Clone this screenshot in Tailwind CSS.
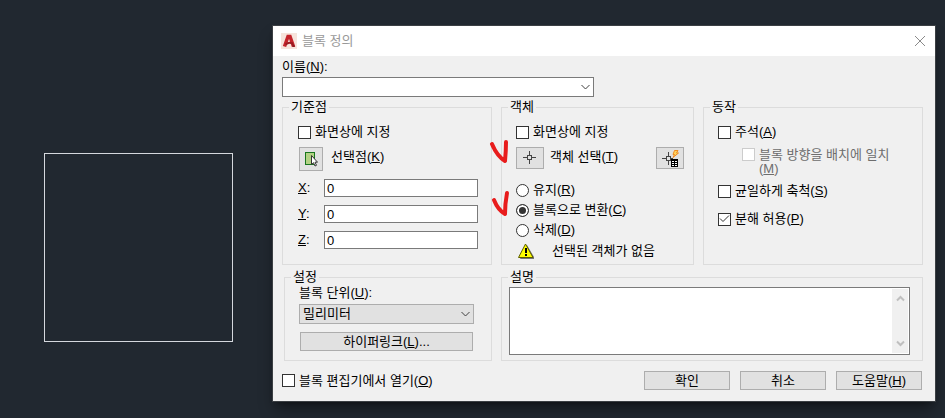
<!DOCTYPE html>
<html lang="ko">
<head>
  <meta charset="UTF-8" />
  <meta name="viewport" content="width=device-width, initial-scale=1.0"/>
  <title>블록 정의</title>
  <script src="https://cdn.jsdelivr.net/npm/@tailwindcss/browser@4"></script>
</head>
<body class="min-h-screen bg-[#212830] font-['Liberation_Sans','Noto_Sans_CJK_KR',sans-serif] text-[13px] leading-[14px] text-black">

  <main class="flex items-start">

    <!-- Drawing area -->
    <section class="w-[272px] shrink-0 pl-[44px] pt-[153px]">
      <div class="size-[189px] border border-[#d5d8dd]"></div>
    </section>

    <!-- Block definition dialog -->
    <div role="dialog" aria-labelledby="dialogTitle" class="relative flex-1 mt-[25px] mr-[9px] border border-[#3b3f43] bg-[#f0f0f0] shadow-lg shadow-black/40">

      <header class="flex items-center h-[30px] pl-2 pr-[9px] bg-white">
        <svg class="size-4 shrink-0" viewBox="0 0 16 16" aria-hidden="true">
          <rect width="16" height="16" fill="#f7e4dc"/>
          <path d="M3.5 13.5 L7 3.5 H9 L12.5 13.5" fill="none" stroke="#c4242b" stroke-width="3.5"/>
          <path d="M4.5 11.5 Q8 8.5 11.5 10.5" fill="none" stroke="#9c1c22" stroke-width="2"/>
          <path d="M11 9 L14.3 14 H11.5 Z" fill="#8e1a20"/>
        </svg>
        <h1 id="dialogTitle" class="ml-[5px] text-[#999999]">블록 정의</h1>
        <button type="button" aria-label="닫기" class="ml-auto">
          <svg class="size-3" viewBox="0 0 12 12" fill="none" stroke="#8a8a8a"><path d="M1 1 L11 11 M11 1 L1 11"/></svg>
        </button>
      </header>

      <form class="pt-1 pl-[9px] pr-3 pb-[11px]">
        <label for="blockName" class="block">이름(<u>N</u>):</label>
        <div class="relative w-[312px] mt-[3px]">
          <select id="blockName" class="block w-full h-5 px-1 appearance-none border border-[#7a7a7a] bg-white">
            <option></option>
          </select>
          <svg class="absolute right-1 top-[7px] w-[9px] h-[7px] pointer-events-none" viewBox="0 0 9 7" fill="none" stroke="#404040"><path d="M0.5 1 L4.5 5 L8.5 1"/></svg>
        </div>

        <div class="grid grid-cols-[210fr_193fr_220fr] gap-x-[9px] gap-y-[5px] mt-[3px]">

          <fieldset class="min-w-0 border border-[#dcdcdc]">
            <legend class="ml-[6px] px-[2px]">기준점</legend>
            <div class="pt-[11px] pl-[15px] pr-[13px] pb-[15px]">
              <label class="flex items-center gap-1">
                <input type="checkbox" class="size-[13px] appearance-none border border-[#333333] bg-white"/>
                화면상에 지정
              </label>
              <div class="flex items-start gap-2 mt-2 pl-px">
                <button type="button" id="pickPoint" class="grid place-items-center size-6 border border-[#adadad] bg-[#e1e1e1]">
                  <svg class="w-[14px] h-4" viewBox="0 0 14 16" aria-hidden="true">
                    <rect x="1.5" y="1.5" width="9" height="12" fill="#b2d183" stroke="#18751d"/>
                    <path d="M7.5 4.5 V13.5 L9.5 11.7 L11 15 L12.5 14.3 L11 11.2 H13.5 Z" fill="#ffffff" stroke="#333333"/>
                  </svg>
                </button>
                <label for="pickPoint" class="pt-[3px]">선택점(<u>K</u>)</label>
              </div>
              <div class="grid grid-cols-[26px_1fr] items-center gap-y-2 mt-2">
                <label for="baseX"><u>X</u>:</label>
                <input type="text" id="baseX" value="0" class="w-full h-[18px] px-[2px] border border-[#7a7a7a] bg-white"/>
                <label for="baseY"><u>Y</u>:</label>
                <input type="text" id="baseY" value="0" class="w-full h-[18px] px-[2px] border border-[#7a7a7a] bg-white"/>
                <label for="baseZ"><u>Z</u>:</label>
                <input type="text" id="baseZ" value="0" class="w-full h-[18px] px-[2px] border border-[#7a7a7a] bg-white"/>
              </div>
            </div>
          </fieldset>

          <fieldset class="relative min-w-0 border border-[#dcdcdc]">
            <legend class="ml-[6px] px-[2px]">객체</legend>
            <div class="pt-[11px] pl-[14px] pr-[9px] pb-1">
              <label class="flex items-center gap-1">
                <input type="checkbox" class="size-[13px] appearance-none border border-[#333333] bg-white"/>
                화면상에 지정
              </label>
              <div class="flex items-start mt-2">
                <button type="button" id="selectObjects" class="grid place-items-center w-7 h-[22px] border border-[#adadad] bg-[#e1e1e1]">
                  <svg class="w-[14px] h-[14px]" viewBox="0 0 14 14" fill="none" stroke="#444444" aria-hidden="true"><rect x="4.5" y="4.5" width="4" height="4"/><path d="M6.5 0 V4 M6.5 9 V13 M0 6.5 H4 M9 6.5 H13"/></svg>
                </button>
                <label for="selectObjects" class="ml-[6px] pt-[3px]">객체 선택(<u>T</u>)</label>
                <button type="button" aria-label="신속 선택" class="grid place-items-center w-7 h-[22px] ml-auto border border-[#adadad] bg-[#e1e1e1]">
                  <svg class="w-[18px] h-[18px]" viewBox="0 0 18 18" fill="none" aria-hidden="true">
                    <path d="M7.5 3 V7 M7.5 12 V16 M1 9.5 H5 M10 9.5 H12" stroke="#444444"/>
                    <rect x="5.5" y="7.5" width="4" height="4" stroke="#444444"/>
                    <path d="M13.5 1.5 H17 L15.5 4 H17.5 L12 8.5 L13.5 5.5 H12 Z" fill="#ffd45c" stroke="#ef8a22"/>
                    <rect x="10" y="10" width="7" height="8" fill="#000000"/>
                    <path d="M11 12 H13 V13 H11 Z M14 12 H16 V13 H14 Z M11 14 H13 V15 H11 Z M14 14 H16 V15 H14 Z M11 16 H13 V17 H11 Z M14 16 H16 V17 H14 Z" fill="#ffffff"/>
                  </svg>
                </button>
              </div>
              <div class="flex flex-col gap-[6px] mt-[14px]">
                <label class="flex items-center gap-1">
                  <input type="radio" name="objectMode" class="size-[13px] appearance-none rounded-full border border-[#333333] bg-white"/>
                  <span>유지(<u>R</u>)</span>
                </label>
                <label class="flex items-center gap-1">
                  <input type="radio" name="objectMode" checked class="size-[13px] appearance-none rounded-full border border-[#333333] bg-white checked:bg-[#333333] checked:shadow-[inset_0_0_0_2px_white]"/>
                  <span>블록으로 변환(<u>C</u>)</span>
                </label>
                <label class="flex items-center gap-1">
                  <input type="radio" name="objectMode" class="size-[13px] appearance-none rounded-full border border-[#333333] bg-white"/>
                  <span>삭제(<u>D</u>)</span>
                </label>
              </div>
              <p class="flex items-center gap-[18px] mt-[6px] pl-[2px]">
                <svg class="w-4 h-4" viewBox="0 0 16 16" aria-hidden="true">
                  <path d="M9 2 L16 14 V16 H2 Z" fill="#777777"/>
                  <path d="M7.5 1 L15 14.5 H0.5 Z" fill="#ffff00" stroke="#5c5c00" stroke-linejoin="round"/>
                  <path d="M7 5 H9 V10 H7 Z M7 11 H9 V13 H7 Z" fill="#000000"/>
                </svg>
                선택된 객체가 없음
              </p>
            </div>
            <!-- Red pen marks -->
            <svg class="absolute -left-[14px] top-[25px] w-[24px] h-[80px] pointer-events-none" viewBox="0 0 24 80" fill="none" stroke="#e81c1c" stroke-width="4" stroke-linecap="round" stroke-linejoin="round" aria-hidden="true">
              <path d="M4 5 Q9 17 17 22 Q18 12 18 3"/>
              <path d="M6 61 Q10 71 17 75 Q17 65 19 54"/>
            </svg>
          </fieldset>

          <fieldset class="min-w-0 border border-[#dcdcdc]">
            <legend class="ml-[6px] px-[2px]">동작</legend>
            <div class="pt-[11px] pl-[14px] pr-3">
              <label class="flex items-center gap-1">
                <input type="checkbox" class="size-[13px] appearance-none border border-[#333333] bg-white"/>
                <span>주석(<u>A</u>)</span>
              </label>
              <label class="flex items-start gap-1 mt-[9px] pl-6 text-[#6d6d6d]">
                <input type="checkbox" disabled class="size-[13px] shrink-0 appearance-none border border-[#cccccc] bg-white"/>
                <span>블록 방향을 배치에 일치<br/>(<u>M</u>)</span>
              </label>
              <label class="flex items-center gap-1 mt-2">
                <input type="checkbox" class="size-[13px] appearance-none border border-[#333333] bg-white"/>
                <span>균일하게 축척(<u>S</u>)</span>
              </label>
              <label class="relative flex items-center gap-1 mt-[14px]">
                <input type="checkbox" checked class="size-[13px] appearance-none border border-[#333333] bg-white"/>
                <svg class="absolute left-0 top-0 size-[13px] pointer-events-none" viewBox="0 0 13 13" fill="none" stroke="#333333" aria-hidden="true"><path d="M2 6.5 L5 9.5 L11 3.5"/></svg>
                <span>분해 허용(<u>P</u>)</span>
              </label>
            </div>
          </fieldset>

          <fieldset class="min-w-0 ml-[2px] border border-[#dcdcdc]">
            <legend class="ml-[6px] px-[2px]">설정</legend>
            <div class="pt-[2px] pl-[14px] pr-[17px] pb-[9px]">
              <label for="blockUnit" class="block">블록 단위(<u>U</u>):</label>
              <div class="relative mt-1">
                <select id="blockUnit" class="block w-full h-5 px-[3px] appearance-none border border-[#adadad] bg-[#e1e1e1]">
                  <option>밀리미터</option>
                </select>
                <svg class="absolute right-1 top-[7px] w-[9px] h-[7px] pointer-events-none" viewBox="0 0 9 7" fill="none" stroke="#404040"><path d="M0.5 1 L4.5 5 L8.5 1"/></svg>
              </div>
              <div class="mt-2 px-px">
                <button type="button" class="block w-full h-[19px] border border-[#adadad] bg-[#e1e1e1]">하이퍼링크(<u>L</u>)...</button>
              </div>
            </div>
          </fieldset>

          <fieldset class="col-span-2 min-w-0 border border-[#dcdcdc]">
            <legend class="ml-[6px] px-[2px]"><label for="description">설명</label></legend>
            <div class="pt-[3px] pl-[7px] pr-3 pb-[5px]">
              <div class="flex h-[68px] p-px border border-[#7a7a7a] bg-white">
                <textarea id="description" class="block flex-1 resize-none px-1 outline-none"></textarea>
                <div class="flex flex-col items-center justify-between w-4 py-[6px] bg-[#f0f0f0]" aria-hidden="true">
                  <svg class="w-[9px] h-[7px]" viewBox="0 0 9 7" fill="none" stroke="#bfbfbf" stroke-width="2"><path d="M1 5.5 L4.5 2 L8 5.5"/></svg>
                  <svg class="w-[9px] h-[7px]" viewBox="0 0 9 7" fill="none" stroke="#bfbfbf" stroke-width="2"><path d="M1 1.5 L4.5 5 L8 1.5"/></svg>
                </div>
              </div>
            </div>
          </fieldset>
        </div>

        <footer class="flex items-center gap-[10px] mt-[10px] pr-px">
          <label class="flex items-center gap-1 mr-auto">
            <input type="checkbox" class="size-[13px] appearance-none border border-[#333333] bg-white"/>
            <span>블록 편집기에서 열기(<u>O</u>)</span>
          </label>
          <button type="button" class="w-[86px] h-[19px] border border-[#adadad] bg-[#e1e1e1]">확인</button>
          <button type="button" class="w-[86px] h-[19px] border border-[#adadad] bg-[#e1e1e1]">취소</button>
          <button type="button" class="w-[86px] h-[19px] border border-[#adadad] bg-[#e1e1e1]">도움말(<u>H</u>)</button>
        </footer>
      </form>
    </div>
  </main>

</body>
</html>
